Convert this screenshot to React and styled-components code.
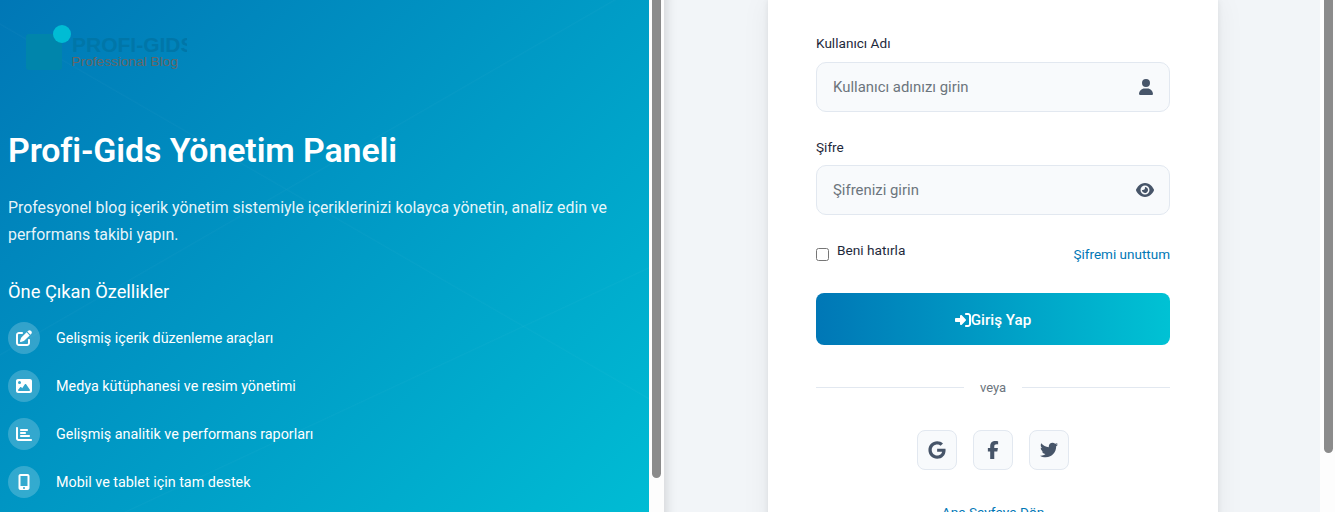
import React from 'react';
import styled, { createGlobalStyle } from 'styled-components';
import { FaPenToSquare, FaImage, FaChartBar, FaMobileScreenButton, FaUser, FaEye, FaRightToBracket, FaGoogle, FaFacebookF, FaTwitter } from 'react-icons/fa6';

const Global = createGlobalStyle`
  html, body { margin: 0; padding: 0; height: 512px; overflow: hidden; background: #fff; }
  * { box-sizing: border-box; }
  body { font-family: Roboto, "Noto Sans", sans-serif; }
`;
const Page = styled.div`display: flex; width: 1335px; height: 512px; overflow: hidden;`;
const Left = styled.section`
  width: 649px; height: 512px; padding: 24px 8px 0; overflow: hidden; color: #fff;
  background:
    linear-gradient(150deg, transparent 39.9%, rgba(255,255,255,.025) 40%, transparent 40.2%),
    linear-gradient(30deg, transparent 54.9%, rgba(255,255,255,.025) 55%, transparent 55.2%),
    linear-gradient(155deg, transparent 69.9%, rgba(255,255,255,.025) 70%, transparent 70.2%),
    linear-gradient(135deg, #0077b6 0%, #00bcd4 100%);
`;
const Gutter = styled.div`
  flex: none; width: ${p => p.$w}px; padding-left: ${p => p.$pad}px; background: #fdfdfd; height: 512px;
`;
const Thumb = styled.div`width: 9px; height: ${p => p.$h}px; background: #8b8b8b; border-radius: 0 0 5px 5px;`;
const LogoSvg = styled.svg`display: block; width: 200px; height: 60px; margin-left: 8px;`;
const Title = styled.h1`margin: 42px 0 0; font-size: 33.9px; line-height: 50px; font-weight: 600; letter-spacing: -.1px;`;
const Lead = styled.p`margin: 18px 0 0; font-size: 15.87px; line-height: 27.2px; width: 625px; color: rgba(255,255,255,.92);`;
const Sub = styled.h3`margin: 29px 0 0; font-size: 18.3px; line-height: 30px; font-weight: 400;`;
const Features = styled.ul`list-style: none; margin: 15px 0 0; padding: 0; display: flex; flex-direction: column; gap: 16px;`;
const Feature = styled.li`display: flex; align-items: center; gap: 16px; font-size: 14.35px; height: 32px;`;
const Bubble = styled.span`
  width: 32px; height: 32px; border-radius: 50%; background: rgba(255,255,255,.2);
  display: flex; align-items: center; justify-content: center; font-size: 16px; flex: none;
`;
const Main = styled.main`
  width: 656px; height: 512px; overflow: hidden; background: #f2f5f8; display: flex; justify-content: center;
  box-shadow: inset 14px 0 12px -12px rgba(0,0,0,.14);
`;
const Card = styled.div`
  width: 450px; height: 540px; flex: none; background: #fff; padding: 34px 48px 0; margin-left: 2px;
  box-shadow: 0 0 6px rgba(0,0,0,.08), 0 0 28px rgba(0,0,0,.06);
`;
const Group = styled.div`margin-bottom: ${p => p.$mb}px;`;
const Label = styled.label`display: block; font-size: 13.6px; line-height: 18px; color: #1e293b; margin-bottom: ${p => p.$mb}px;`;
const InputBox = styled.div`
  height: 50px; border: 1px solid #e2e8f0; border-radius: 10px; background: #f8fafc;
  display: flex; align-items: center; justify-content: space-between; padding: 0 15px 0 16px;
  font-size: 14.9px; color: #6c757d; svg { color: #475569; }
`;
const Options = styled.div`display: flex; justify-content: space-between; align-items: flex-start; height: 53px;`;
const Remember = styled.label`display: flex; align-items: flex-start; gap: 8px; font-size: 13.7px; line-height: 20px; color: #1e293b;`;
const Check = styled.input`width: 13px; height: 13px; margin: 8px 0 0;`;
const Forgot = styled.a`font-size: 13.5px; line-height: 20px; color: #0077b6; margin-top: 4px;`;
const Submit = styled.button`
  width: 100%; height: 52px; border: 0; border-radius: 8px; color: #fff; font: 500 15.2px Roboto, sans-serif; padding: 2px 0 0;
  background: linear-gradient(90deg, #0077b6, #00c2d4); display: flex; align-items: center; justify-content: center;
`;
const Divider = styled.div`
  display: flex; align-items: center; gap: 16px; margin-top: 32px; height: 20px; font-size: 13px; color: #6c757d;
  &::before, &::after { content: ""; flex: 1; height: 1px; background: #e2e8f0; }
`;
const Socials = styled.div`display: flex; justify-content: center; gap: 16px; margin-top: 33px;`;
const Social = styled.span`
  width: 40px; height: 40px; border: 1px solid #e2e8f0; border-radius: 8px; background: #f8fafc; color: #475569;
  display: flex; align-items: center; justify-content: center; font-size: 18px;
`;
const Back = styled.a`display: block; text-align: center; margin-top: 32px; font-size: 13.6px; line-height: 20px; color: #0077b6;`;

const feats = [
  [FaPenToSquare, 'Gelişmiş içerik düzenleme araçları'],
  [FaImage, 'Medya kütüphanesi ve resim yönetimi'],
  [FaChartBar, 'Gelişmiş analitik ve performans raporları'],
  [FaMobileScreenButton, 'Mobil ve tablet için tam destek'],
];

export default function App() {
  return (
    <Page>
      <Global />
      <Left>
        <LogoSvg viewBox="0 0 200 60">
          <rect x="10" y="10" width="36" height="36" rx="3" fill="#0085ab" />
          <circle cx="46" cy="10" r="9" fill="#00bcd4" />
          <svg x="0" y="0" width="171" height="60">
            <text x="56" y="28" fontFamily="Liberation Sans, sans-serif" fontWeight="700" fontSize="21" fill="#0076a8">PROFI-GIDS</text>
          </svg>
          <text x="55.5" y="41.5" fontFamily="Liberation Sans, sans-serif" fontSize="13.7" fill="#666">Professional Blog</text>
        </LogoSvg>
        <Title>Profi-Gids Yönetim Paneli</Title>
        <Lead>Profesyonel blog içerik yönetim sistemiyle içeriklerinizi kolayca yönetin, analiz edin ve performans takibi yapın.</Lead>
        <Sub>Öne Çıkan Özellikler</Sub>
        <Features>
          {feats.map(([Icon, text]) => (
            <Feature key={text}><Bubble><Icon /></Bubble>{text}</Feature>
          ))}
        </Features>
      </Left>
      <Gutter $w={15} $pad={3}><Thumb $h={478} /></Gutter>
      <Main>
        <Card>
          <Group $mb={26}>
            <Label $mb={10}>Kullanıcı Adı</Label>
            <InputBox>Kullanıcı adınızı girin<FaUser size={16} /></InputBox>
          </Group>
          <Group $mb={25}>
            <Label $mb={9}>Şifre</Label>
            <InputBox>Şifrenizi girin<FaEye size={18} /></InputBox>
          </Group>
          <Options>
            <Remember><Check type="checkbox" />Beni hatırla</Remember>
            <Forgot>Şifremi unuttum</Forgot>
          </Options>
          <Submit><FaRightToBracket size={16} />Giriş Yap</Submit>
          <Divider>veya</Divider>
          <Socials>
            <Social><FaGoogle /></Social>
            <Social><FaFacebookF /></Social>
            <Social><FaTwitter /></Social>
          </Socials>
          <Back>Ana Sayfaya Dön</Back>
        </Card>
      </Main>
      <Gutter $w={15} $pad={4}><Thumb $h={453} /></Gutter>
    </Page>
  );
}
